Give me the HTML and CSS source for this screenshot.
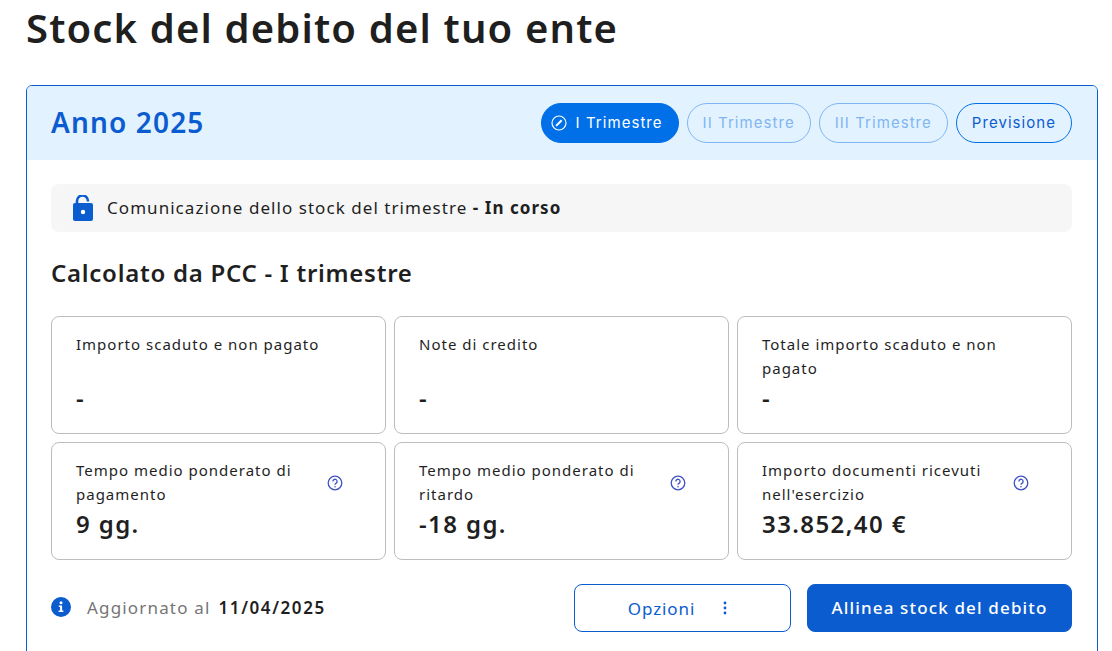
FILE: index.html
```html
<!DOCTYPE html>
<html lang="it">
<head>
<meta charset="utf-8">
<title>Stock del debito</title>
<link rel="stylesheet" href="styles.css">
</head>
<body>
<main class="page">
  <h1 class="title">Stock del debito del tuo ente</h1>
  <section class="panel">
    <header class="panel-head">
      <h2 class="year">Anno 2025</h2>
      <nav class="pills">
        <span class="pill pill-active">
          <svg class="pill-icon" viewBox="0 0 16 16" fill="none" stroke="#fff"><circle cx="8" cy="8" r="7" stroke-width="1.2"/><path d="M5.100 10.900L10.700 5.300" stroke-width="2"/></svg>
          I Trimestre
        </span>
        <span class="pill pill-off">II Trimestre</span>
        <span class="pill pill-off">III Trimestre</span>
        <span class="pill pill-on">Previsione</span>
      </nav>
    </header>
    <div class="panel-body">
      <div class="status">
        <svg class="lock" viewBox="0 0 20 26"><path d="M4 9V6a5.500 5.500 0 0 1 11 0v.5" fill="none" stroke="#0b5ccf" stroke-width="2.600"/><rect x="0" y="8" width="20" height="18" rx="2" fill="#0b5ccf"/><circle cx="10" cy="17" r="2.200" fill="#fff"/></svg>
        <span>Comunicazione dello stock del trimestre <b>- In corso</b></span>
      </div>
      <h3 class="subtitle">Calcolato da PCC - I trimestre</h3>
      <div class="grid">
        <div class="stat"><div class="stat-label"><span>Importo scaduto e non pagato</span></div><div class="stat-value">-</div></div>
        <div class="stat"><div class="stat-label"><span>Note di credito</span></div><div class="stat-value">-</div></div>
        <div class="stat"><div class="stat-label"><span>Totale importo scaduto e non pagato</span></div><div class="stat-value">-</div></div>
        <div class="stat"><div class="stat-label"><span>Tempo medio ponderato di pagamento</span><svg class="help" viewBox="0 0 16 16" fill="none" stroke="#3f51c4"><circle cx="8" cy="8" r="6.800" stroke-width="1.300"/><path d="M5.900 6.400a2.100 2.100 0 1 1 3.300 1.700c-.8.500-1.200.9-1.200 1.700" stroke-width="1.300"/><circle cx="8" cy="11.700" r=".8" fill="#3f51c4" stroke="none"/></svg></div><div class="stat-value">9 gg.</div></div>
        <div class="stat"><div class="stat-label"><span>Tempo medio ponderato di ritardo</span><svg class="help" viewBox="0 0 16 16" fill="none" stroke="#3f51c4"><circle cx="8" cy="8" r="6.800" stroke-width="1.300"/><path d="M5.900 6.400a2.100 2.100 0 1 1 3.300 1.700c-.8.500-1.200.9-1.200 1.700" stroke-width="1.300"/><circle cx="8" cy="11.700" r=".8" fill="#3f51c4" stroke="none"/></svg></div><div class="stat-value">-18 gg.</div></div>
        <div class="stat"><div class="stat-label"><span>Importo documenti ricevuti nell'esercizio</span><svg class="help" viewBox="0 0 16 16" fill="none" stroke="#3f51c4"><circle cx="8" cy="8" r="6.800" stroke-width="1.300"/><path d="M5.900 6.400a2.100 2.100 0 1 1 3.300 1.700c-.8.500-1.200.9-1.200 1.700" stroke-width="1.300"/><circle cx="8" cy="11.700" r=".8" fill="#3f51c4" stroke="none"/></svg></div><div class="stat-value">33.852,40 €</div></div>
      </div>
      <div class="foot">
        <svg class="info" viewBox="0 0 20 20"><circle cx="10" cy="10" r="10" fill="#0b5ccf"/><circle cx="10" cy="5.700" r="1.500" fill="#fff"/><path d="M7.800 8.600h3.300v5h1.300v1.500H7.600v-1.500h1.500V10.100H7.800z" fill="#fff"/></svg>
        <span class="updated">Aggiornato al</span>
        <b class="date">11/04/2025</b>
        <div class="actions">
          <button class="btn btn-outline">Opzioni
            <svg class="dots" viewBox="0 0 4 14"><circle cx="2" cy="2" r="1.400"/><circle cx="2" cy="7" r="1.400"/><circle cx="2" cy="12" r="1.400"/></svg>
          </button>
          <button class="btn btn-solid">Allinea stock del debito</button>
        </div>
      </div>
    </div>
  </section>
</main>
</body>
</html>
```
FILE: styles.css
```css
* { box-sizing: border-box; }
html, body { margin: 0; height: 100%; overflow: hidden; background: #fff; }
body { font-family: "Noto Sans", "Open Sans", sans-serif; color: #1f1f1f; }
.page { padding: 0 14px 0 26px; }
.title { margin: 0; height: 85px; padding-top: 2px; font-size: 40px; line-height: 52px; font-weight: 600; letter-spacing: 1.15px; }
.panel { border: 1px solid #0b5ccf; border-radius: 6px; height: 700px; overflow: hidden; }
.panel-head { height: 74px; background: #e3f2ff; display: flex; align-items: center; justify-content: space-between; padding: 0 25px 0 24px; }
.year { margin: 0 0 2px; font-size: 28px; font-weight: 600; color: #0b5ccf; letter-spacing: 1.15px; }
.pills { display: flex; gap: 8px; }
.pill { height: 40px; border-radius: 20px; display: flex; align-items: center; padding: 0 15px 2px; font-family: Inter, sans-serif; font-size: 15px; letter-spacing: 1.05px; border: 1px solid; }
.pill-active { background: #0070e8; border-color: #0070e8; color: #fff; gap: 9px; padding: 0 15px 2px 9px; }
.pill-icon { width: 16px; height: 16px; margin-top: 2px; }
.pill-off { color: #7fb6f2; border-color: #7fb6f2; }
.pill-on { color: #0b5ccf; border-color: #0070e8; }
.panel-body { padding: 24px 25px 0 24px; }
.status { height: 48px; background: #f6f6f6; border-radius: 8px; display: flex; align-items: center; gap: 14px; padding: 0 0 0 22px; font-size: 17px; letter-spacing: 1.05px; }
.status span { padding-bottom: 2px; }
.lock { width: 20px; height: 26px; }
.subtitle { margin: 25px 0 27px; font-size: 24px; line-height: 32px; font-weight: 600; letter-spacing: .73px; }
.grid { display: grid; grid-template-columns: repeat(3, 1fr); gap: 8px; }
.stat { height: 118px; border: 1px solid #bdbdbd; border-radius: 8px; padding: 15px 24px 0; display: flex; flex-direction: column; }
.stat-label { height: 48px; display: flex; align-items: center; justify-content: space-between; gap: 20px; font-size: 15px; line-height: 24px; letter-spacing: 1px; }
.stat-label span { align-self: flex-start; }
.help { flex: none; width: 16px; height: 16px; margin: 2px 18px 0 0; }
.stat-value { font-size: 24px; line-height: 32px; font-weight: 600; letter-spacing: 1.4px; margin-top: 2px; }
.foot { display: flex; align-items: center; margin-top: 24px; height: 48px; font-size: 17px; letter-spacing: 1.17px; }
.info { width: 20px; height: 20px; margin-right: 16px; margin-top: -2px; }
.updated { color: #757575; margin: 0 8px 2px 0; }
.date { font-weight: 600; letter-spacing: 1.6px; margin-bottom: 2px; }
.actions { margin-left: auto; display: flex; gap: 16px; }
.btn { height: 48px; border-radius: 8px; font-family: inherit; font-size: 17px; letter-spacing: .9px; font-weight: 500; display: flex; align-items: center; justify-content: center; }
.btn-outline { width: 217px; background: #fff; border: 1px solid #0b5ccf; color: #0b5ccf; gap: 28px; padding: 0 10px 0 0; font-weight: 400; }
.dots { width: 4px; height: 14px; fill: #0b5ccf; }
.btn-solid { width: 265px; background: #0b5ccf; border: 1px solid #0b5ccf; color: #fff; font-weight: 500; letter-spacing: 1.15px; padding: 0 0 2px; }
```
